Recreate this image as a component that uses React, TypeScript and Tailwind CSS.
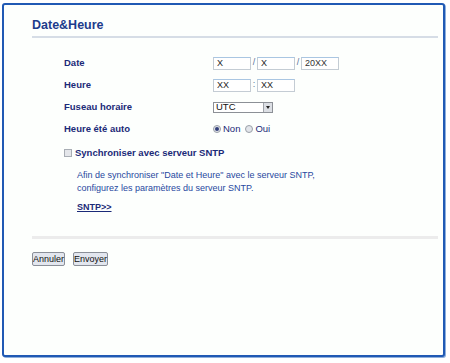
import React from 'react';

const labelCls = 'text-[9.5px] font-bold text-[#1b2a78]';
const inputCls =
  'w-[38px] h-[13px] border border-[#c4ccd4] border-t-[#a9c6e2] bg-white px-[3px] text-[9px] leading-[11px] text-[#222] outline-none';

function Row({ label, children }: { label: string; children: React.ReactNode }) {
  return (
    <div className="flex h-[22px] items-center">
      <div className={`w-[149px] ${labelCls}`}>{label}</div>
      <div className="flex items-center">{children}</div>
    </div>
  );
}

function Sep({ c }: { c: string }) {
  return <span className="w-[6px] text-center text-[9px] text-[#5a6f9a]">{c}</span>;
}

function Radio({ checked, label }: { checked?: boolean; label: string }) {
  return (
    <span className="mr-[5px] flex items-center">
      <span className="flex h-[8px] w-[8px] items-center justify-center rounded-full border border-[#9aa0a8] bg-[#e2e5ea]">
        {checked && <span className="h-[4px] w-[4px] rounded-full bg-[#33407a]" />}
      </span>
      <span className="ml-[2px] text-[9.5px] text-[#1b2a78]">{label}</span>
    </span>
  );
}

export default function App() {
  return (
    <div className="h-[363px] w-[450px] bg-white pl-[2px] pt-[3px]" style={{ fontFamily: '"Liberation Sans", Arial, sans-serif' }}>
      <div className="h-[354px] w-[443px] rounded-[3px] border-2 border-[#2059b4] bg-[#fdfffd] pl-[28px] pr-[3px] pt-[12px] shadow-[1px_1px_0_#8fb0dc]">
        <div className="h-[19px] text-[12.5px] font-bold leading-[16px] text-[#1d3c8c]">Date&amp;Heure</div>
        <div className="h-[2px] w-[406px] bg-[#d6dde6]" />

        <div className="ml-[32px] mt-[14px]">
          <Row label="Date">
            <input className={inputCls} defaultValue="X" />
            <Sep c="/" />
            <input className={inputCls} defaultValue="X" />
            <Sep c="/" />
            <input className={`${inputCls} text-[#333]`} defaultValue="20XX" />
          </Row>
          <Row label="Heure">
            <input className={inputCls} defaultValue="XX" />
            <Sep c=":" />
            <input className={inputCls} defaultValue="XX" />
          </Row>
          <Row label="Fuseau horaire">
            <div className="flex h-[11px] w-[60px] items-center border border-[#8c9096] bg-white">
              <span className="flex-1 pl-[2px] text-[9.5px] leading-[10px] text-[#111]">UTC</span>
              <span className="flex h-[9px] w-[9px] items-center justify-center border-l border-[#a0a4aa] bg-[#dcdfe4]">
                <span className="h-0 w-0 border-x-[2.5px] border-t-[3px] border-x-transparent border-t-[#222]" />
              </span>
            </div>
          </Row>
          <Row label="Heure été auto">
            <Radio checked label="Non" />
            <Radio label="Oui" />
          </Row>

          <div className="flex h-[26px] items-center">
            <span className="h-[8px] w-[8px] border border-[#a8adb4] bg-[#e4e6ea]" />
            <span className={`ml-[3px] ${labelCls}`}>Synchroniser avec serveur SNTP</span>
          </div>

          <div className="ml-[13px] mt-[3px] text-[9px] leading-[13px] text-[#2848a0]">
            <p>Afin de synchroniser "Date et Heure" avec le serveur SNTP,</p>
            <p>configurez les paramètres du serveur SNTP.</p>
            <p className="mt-[6px] font-bold text-[#1b2a78] underline">SNTP&gt;&gt;</p>
          </div>
        </div>

        <div className="mt-[22px] h-[3px] w-[406px] bg-[#ececec]" />

        <div className="mt-[13px] flex gap-[8px]">
          <button className="h-[14px] rounded-[2px] border border-[#8a8f98] bg-[#e2e6ee] px-0 text-[9px] leading-[12px] text-[#111]">Annuler</button>
          <button className="h-[14px] rounded-[2px] border border-[#8a8f98] bg-[#e2e6ee] px-0 text-[9px] leading-[12px] text-[#111]">Envoyer</button>
        </div>
      </div>
    </div>
  );
}
